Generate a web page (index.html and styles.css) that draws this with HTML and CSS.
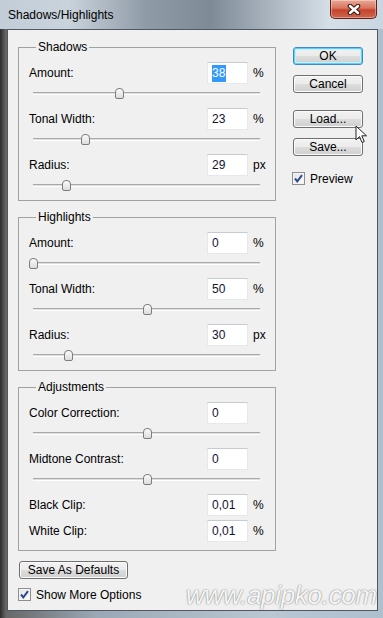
FILE: index.html
```html
<!DOCTYPE html>
<html lang="en">
<head>
<meta charset="UTF-8" />
<meta name="viewport" content="width=device-width, initial-scale=1" />
<title>Shadows/Highlights</title>
<link rel="stylesheet" href="styles.css">
</head>
<body>

<div class="window">
  <div class="titlebar">
    <span class="title">Shadows/Highlights</span>
    <div class="close">
      <svg width="14" height="11" viewBox="0 0 14 11">
        <path d="M3 2 L11 9 M11 2 L3 9" stroke="#3b1d16" stroke-width="4.6" stroke-linecap="round"/>
        <path d="M3 2 L11 9 M11 2 L3 9" stroke="#fff" stroke-width="2.4" stroke-linecap="round"/>
      </svg>
    </div>
  </div>

  <div class="client">
    <div class="main">
      <fieldset class="group">
        <legend>Shadows</legend>
        <div class="row"><span class="lbl">Amount:</span><span class="field"><span class="sel">38</span></span><span class="unit">%</span></div>
        <div class="slider"><div class="track"></div><div class="thumb" style="left:38%"></div></div>
        <div class="row"><span class="lbl">Tonal Width:</span><span class="field">23</span><span class="unit">%</span></div>
        <div class="slider"><div class="track"></div><div class="thumb" style="left:23%"></div></div>
        <div class="row"><span class="lbl">Radius:</span><span class="field">29</span><span class="unit">px</span></div>
        <div class="slider"><div class="track"></div><div class="thumb" style="left:14.5%"></div></div>
      </fieldset>

      <fieldset class="group">
        <legend>Highlights</legend>
        <div class="row"><span class="lbl">Amount:</span><span class="field">0</span><span class="unit">%</span></div>
        <div class="slider"><div class="track"></div><div class="thumb" style="left:0%"></div></div>
        <div class="row"><span class="lbl">Tonal Width:</span><span class="field">50</span><span class="unit">%</span></div>
        <div class="slider"><div class="track"></div><div class="thumb" style="left:50%"></div></div>
        <div class="row"><span class="lbl">Radius:</span><span class="field">30</span><span class="unit">px</span></div>
        <div class="slider"><div class="track"></div><div class="thumb" style="left:15.4%"></div></div>
      </fieldset>

      <fieldset class="group group-last">
        <legend>Adjustments</legend>
        <div class="row"><span class="lbl">Color Correction:</span><span class="field">0</span><span class="unit"></span></div>
        <div class="slider"><div class="track"></div><div class="thumb" style="left:50%"></div></div>
        <div class="row"><span class="lbl">Midtone Contrast:</span><span class="field">0</span><span class="unit"></span></div>
        <div class="slider"><div class="track"></div><div class="thumb" style="left:50%"></div></div>
        <div class="row"><span class="lbl">Black Clip:</span><span class="field">0,01</span><span class="unit">%</span></div>
        <div class="row row-tight"><span class="lbl">White Clip:</span><span class="field">0,01</span><span class="unit">%</span></div>
      </fieldset>

      <button class="btn btn-defaults">Save As Defaults</button>
      <div class="check check-more">
        <span class="box"><svg width="11" height="11" viewBox="0 0 11 11"><path d="M2 5.5 L4.3 8.3 L9 2.2" fill="none" stroke="#2c4a8c" stroke-width="2"/></svg></span>
        Show More Options
      </div>
    </div>

    <div class="side">
      <button class="btn btn-ok">OK</button>
      <button class="btn btn-cancel">Cancel</button>
      <button class="btn btn-load">Load...</button>
      <button class="btn btn-save">Save...</button>
      <div class="check check-preview">
        <span class="box"><svg width="11" height="11" viewBox="0 0 11 11"><path d="M2 5.5 L4.3 8.3 L9 2.2" fill="none" stroke="#2c4a8c" stroke-width="2"/></svg></span>
        Preview
      </div>
    </div>
  </div>

  <svg class="cursor" width="14" height="20" viewBox="0 0 14 20">
    <path d="M1 1 L1 15 L4.5 11.5 L7 17.5 L9.3 16.5 L6.8 10.8 L11.5 10.8 Z" fill="#fff" stroke="#222" stroke-width="1"/>
  </svg>
  <div class="watermark">www.apipko.com</div>
</div>

</body>
</html>
```

FILE: styles.css
```css
body{margin:0; background:#fff; font-family:"Liberation Sans",Arial,sans-serif; font-size:12px; color:#000;}

.window{position:relative; width:383px; height:618px; box-sizing:border-box; display:flex; flex-direction:column; overflow:hidden;
  background:linear-gradient(90deg,#2c2c2c 0,#676767 6px,#9aa8b5 25%,#b9c7d3 70%,#aebfce 100%);}

.titlebar{height:29px; flex:none; display:flex; align-items:flex-start;
  background:linear-gradient(90deg,#c2cdd8 0,#c9d3dc 18%,#8f9ba7 38%,#7e8a96 55%,#aeb9c4 72%,#d6dfe7 86%,#c9d6e2 100%);}
.title{padding:8px 0 0 8px; line-height:15px; font-size:12px;}
.close{margin-left:auto; margin-right:6px; width:47px; height:19px; box-sizing:border-box; display:flex; align-items:center; justify-content:center;
  border:1px solid #5e2219; border-top:none; border-radius:0 0 5px 5px;
  background:linear-gradient(#e9a898 0,#d9745d 45%,#c4442d 55%,#d0664c 100%);
  box-shadow:inset 0 0 0 1px rgba(255,255,255,.35);}

.client{flex:1; margin:0 5px 7px 7px; border:1px solid #4f5863; background:#f0f0f0; display:flex; padding-left:10px;}

.main{width:258px; margin-top:10px; display:flex; flex-direction:column; align-items:flex-start;}
.side{width:70px; margin-left:17px; padding-top:17px; display:flex; flex-direction:column;}

.group{width:258px; box-sizing:border-box; margin:0 0 9px 0; padding:8px 0 0 10px; border:1px solid #a2a2a2; min-width:0;}
.group-last{padding-bottom:8px; margin-bottom:0;}
.group legend{padding:0 2px; margin-left:7px; line-height:14px; font-size:12px;}

.row{display:flex; align-items:center; height:22px;}
.row-tight{margin-top:4px;}
.lbl{flex:1;}
.field{width:41px; height:22px; box-sizing:border-box; padding-left:4px; line-height:20px; background:#fff;
  border:1px solid #e3e9ef; border-top-color:#c4cbd3; color:#111133;}
.sel{background:#3399ff; color:#fff; padding:1px 1px 2px 0;}
.unit{width:27px; box-sizing:border-box; padding-left:5px;}

.slider{position:relative; height:24px; box-sizing:border-box; padding-top:8px; margin:0 15px 0 4px;}
.track{height:1px; background:#dedede; border-top:1px solid #aaaaaa; border-bottom:1px solid #fff;}
.thumb{position:absolute; top:4px; width:9px; height:11px; margin-left:-4px; box-sizing:border-box;
  border:1px solid #7d7d7d; border-radius:4px 4px 2px 2px; background:linear-gradient(#fbfbfb,#dcdcdc);}

.btn{height:18px; width:70px; padding:0; font-family:"Liberation Sans",Arial,sans-serif; font-size:12px; line-height:16px; color:#000;
  border:1px solid #707070; border-radius:3px; box-shadow:inset 0 0 0 1px #fbfbfb;
  background:linear-gradient(#f2f2f2 0,#ebebeb 50%,#dddddd 51%,#cfcfcf 100%);}
.btn-ok{border-color:#3c8ad0; box-shadow:inset 0 0 0 1px #5fd0f5, inset 0 0 0 2px #c8eefb;}
.btn-cancel{margin-top:10px;}
.btn-load{margin-top:17px;}
.btn-save{margin-top:10px;}
.btn-defaults{width:109px; margin:10px 0 0 1px;}

.check{display:flex; align-items:center; height:13px;}
.box{width:13px; height:13px; box-sizing:border-box; margin-right:5px; display:flex; align-items:center; justify-content:center;
  border:1px solid #8e8f8f; background:linear-gradient(135deg,#e4e4e4,#fdfdfd); box-shadow:inset 0 0 0 1px #f4f4f4;}
.check-more{margin-top:9px;}
.check-preview{margin:16px 0 0 -1px;}

.cursor{position:absolute; left:355px; top:125px;}
.watermark{position:absolute; left:186px; top:580px; font-size:26px; font-style:italic; letter-spacing:-.3px;
  color:rgba(255,255,255,.95); text-shadow:0 0 1px rgba(90,90,90,.8), 0 0 2px rgba(120,120,120,.5);}
```
